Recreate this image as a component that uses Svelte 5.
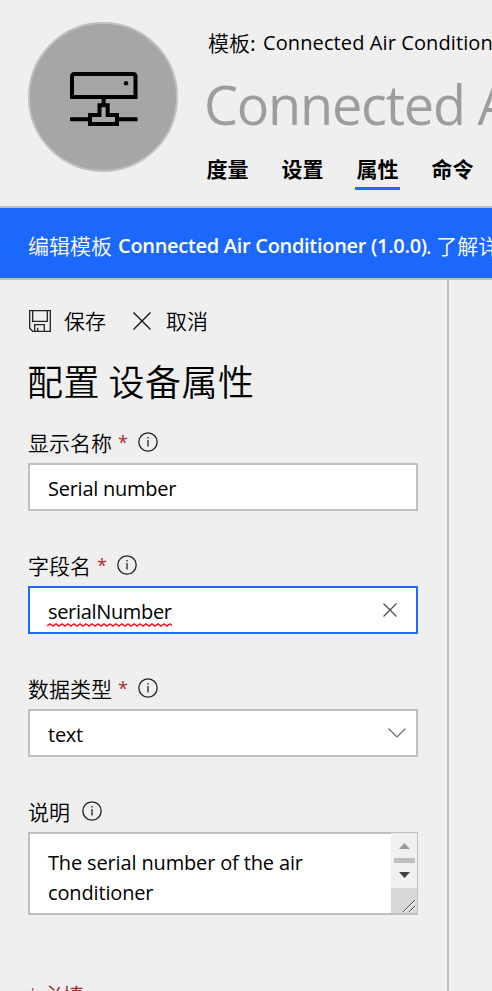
<script>
  const tabs = ['度量', '设置', '属性', '命令'];
  const active = '属性';
</script>

{#snippet info()}
  <svg class="info" width="20" height="20" viewBox="0 0 20 20" fill="none" stroke="#222">
    <circle cx="10" cy="10" r="9.2" stroke-width="1.3" />
    <path d="M10 8v6.4M10 5v1.5" stroke-width="1.3" />
  </svg>
{/snippet}

{#snippet label(text, required)}
  <div class="label">
    <span>{text}</span>
    {#if required}<span class="star">*</span>{/if}
    {@render info()}
  </div>
{/snippet}

<div class="page">
  <header>
    <div class="avatar">
      <svg width="68" height="54" viewBox="0 0 68 54" fill="none" stroke="#000" stroke-width="4">
        <path d="M2 25V4.500Q2 2 4.500 2H63Q65.500 2 65.500 4.500V25Z" />
        <circle cx="56" cy="11.300" r="2.200" fill="#000" stroke="none" />
        <path d="M33.600 27v5M0 47.200h20M47 47.200h20.500" />
        <path d="M29.500 33.300h8.200v9.700h9.300v9H20v-9h9.500z" />
      </svg>
    </div>
    <div class="heading">
      <div class="template"><span class="cjk">模板:</span><span class="tname">Connected Air Conditioner (1.0.0)</span></div>
      <h1>Connected Air Conditioner</h1>
      <nav>
        {#each tabs as tab}
          <span class="tab" class:active={tab === active}>{tab}</span>
        {/each}
      </nav>
    </div>
  </header>

  <div class="banner"><span class="light">编辑模板</span><b>Connected Air Conditioner (1.0.0)</b><span class="light">. 了解详细信息</span></div>

  <main>
    <section>
      <div class="toolbar">
        <svg width="22" height="22" viewBox="0 0 22 22" fill="none" stroke="#222" stroke-width="1.300">
          <path d="M.7.700h20.600v20.600H3.700l-3-3zM3.700.700v10.600h14.600V.700M5.700 21.300v-6.600h9.600v6.600M8.700 21.300v-3.600" />
        </svg>
        <span class="save">保存</span>
        <svg class="x" width="18" height="18" viewBox="0 0 18 18" stroke="#111" stroke-width="1.300">
          <path d="M.5.500l17 17M17.500.500l-17 17" />
        </svg>
        <span>取消</span>
      </div>
      <h2>配置 设备属性</h2>

      <div class="field">
        {@render label('显示名称', true)}
        <div class="box"><span class="tight">Serial number</span></div>
      </div>
      <div class="field">
        {@render label('字段名', true)}
        <div class="box focus">
          <span class="misspelt">serialNumber
            <svg class="wave" width="125" height="4" viewBox="0 0 125 4" fill="none" stroke="#f0141e" stroke-width="1.500">
              <path d={'M0 3' + Array.from({ length: 42 }, (_, i) => `L${(i + 1) * 3} ${i % 2 ? 3 : 1}`).join('')} />
            </svg>
          </span>
          <svg class="clear" width="14" height="14" viewBox="0 0 14 14" stroke="#444" stroke-width="1.100">
            <path d="M.5.500l13 13M13.500.500l-13 13" />
          </svg>
        </div>
      </div>
      <div class="field">
        {@render label('数据类型', true)}
        <div class="box">
          <span class="tight">text</span>
          <svg class="chev" width="18" height="10" viewBox="0 0 18 10" fill="none" stroke="#666" stroke-width="1.100">
            <path d="M.5.500L9 9l8.500-8.500" />
          </svg>
        </div>
      </div>
      <div class="field">
        {@render label('说明', false)}
        <div class="area">
          <div class="lines"><div>The serial number of the air</div><div>conditioner</div></div>
          <div class="scroll">
            <svg width="26" height="55" viewBox="0 0 26 55">
              <path d="M8 16h11l-5.500-6z" fill="#999" />
              <path d="M3 25h21v5H3z" fill="#bfbfbf" />
              <path d="M8 39h11l-5.500 6z" fill="#404040" />
            </svg>
            <svg class="grip" width="26" height="25" viewBox="0 0 26 25" fill="none">
              <path d="M13 24L25 12M19 24l6-6" stroke="#fff" stroke-width="1.400" />
              <path d="M12 24L24 12M18 24l6-6" stroke="#444" stroke-width="1" />
            </svg>
          </div>
        </div>
      </div>
      <div class="required"><span>*</span>必填</div>
    </section>
  </main>
</div>

<style>
  :global(body) { background: #efefef; }
  .page {
    width: 492px; height: 991px; overflow: hidden; background: #efefef; color: #000;
    display: flex; flex-direction: column; box-sizing: border-box;
    font-family: "Open Sans", "Noto Sans CJK SC", sans-serif; font-size: 20px; line-height: 30px;
    white-space: nowrap;
  }
  svg { display: block; flex: none; }
  header { height: 206px; flex: none; display: flex; border-bottom: 2px solid #c0c0c0; }
  .avatar {
    width: 150px; height: 150px; box-sizing: border-box; margin: 22px 0 0 28px; flex: none;
    border: 2px solid #c0c0c0; border-radius: 50%; background: #a6a6a6;
    display: flex; justify-content: center; padding: 48px 0 0 2px;
  }
  .heading { margin-left: 27px; }
  .template { margin: 27px 0 0 3px; display: flex; height: 31px; }
  .cjk { font-size: 21px; font-weight: 350; width: 55px; font-family: "Noto Sans CJK SC", sans-serif; }
  .tname { letter-spacing: 0.1px; padding-top: 1px; }
  h1 { margin: 8px 0 0 -1px; font-size: 54px; line-height: 76px; font-weight: 400; color: #9d9d9d; letter-spacing: -1.2px; }
  nav { display: flex; gap: 30px; margin-top: 12px; }
  .tab { width: 45px; height: 36px; box-sizing: border-box; text-align: center; font-size: 21px; line-height: 29px; font-weight: 700; font-family: "Noto Sans CJK SC", sans-serif; border-bottom: 3px solid transparent; }
  .active { border-color: #1f69ff; }
  .banner {
    height: 67px; flex: none; display: flex; align-items: center; background: #1c68fa; color: #fff;
    border-bottom: 2px solid #c0c0c0; padding: 3px 0 0 28px;
  }
  .light { font-family: "Noto Sans CJK SC", sans-serif; font-size: 21px; font-weight: 350; flex: none; }
  .banner b { font-weight: 600; margin: 2px 0 0 6px; letter-spacing: -0.3px; width: 308px; flex: none; }
  main { flex: 1; display: flex; min-height: 0; }
  section { border-right: 2px solid #c0c0c0; padding: 26px 29px 0 28px; box-sizing: border-box; width: 449px; }
  .toolbar, h2, .label, .required { font-family: "Noto Sans CJK SC", sans-serif; font-weight: 350; font-size: 21px; }
  .toolbar { display: flex; align-items: center; height: 30px; padding-left: 1px; }
  .toolbar span { margin-top: -3px; }
  .toolbar .save { margin-left: 13px; }
  .x { margin: 0 15px 0 27px; }
  h2 { margin: 14px 0 0 -1px; font-size: 36px; line-height: 60px; height: 78px; letter-spacing: 0.5px; }
  .field { margin-bottom: 40px; }
  .label { display: flex; align-items: center; height: 30px; margin-bottom: 5px; }
  .label span { margin-top: -2px; }
  .label .star { color: #b5272b; width: 14px; margin: -3px 0 0 6px; font-family: "Open Sans", sans-serif; font-weight: 400; font-size: 18px; }
  .info { margin: -3px 0 0 6px; }
  .label span:first-child + .info { margin-left: 12px; }
  .box { height: 48px; width: 390px; box-sizing: border-box; border: 2px solid #c0c0c0; background: #fff; display: flex; align-items: center; padding: 3px 10px 0 18px; }
  .focus { border-color: #1f69ff; }
  .tight { letter-spacing: -0.25px; }
  .misspelt { position: relative; letter-spacing: -0.33px; }
  .wave { position: absolute; left: -1px; bottom: 0; }
  .clear { margin: -4px 9px 0 auto; }
  .chev { margin: -3px 0 0 auto; }
  .area { width: 390px; height: 83px; box-sizing: border-box; border: 2px solid #c0c0c0; background: #fff; display: flex; justify-content: space-between; }
  .lines { padding: 14px 0 0 18px; letter-spacing: -0.15px; }
  .scroll { width: 26px; margin-top: -1px; margin-right: -1px; height: 80px; background: #f0f0f0; }
  .grip { background: #d7d7d7; }
  .required { color: #a4262c; margin-top: 64px; margin-left: -1px; display: flex; }
  .required span { width: 15px; font-family: "Open Sans", sans-serif; padding-top: 1px; }
</style>
